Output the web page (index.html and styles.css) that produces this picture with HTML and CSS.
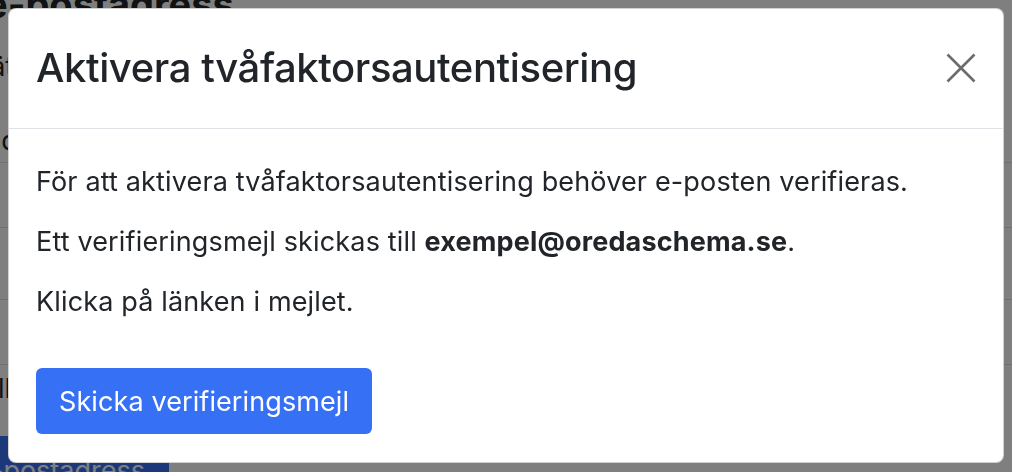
FILE: index.html
```html
<!DOCTYPE html>
<html lang="sv">
<head>
<meta charset="utf-8">
<title>Aktivera tvåfaktorsautentisering</title>
<link rel="stylesheet" href="styles.css">
</head>
<body>
<div class="page">
  <h1 class="page-title">e-postadress</h1>
  <p class="page-text">rätt adress</p>
  <p class="page-label">adress</p>
  <div class="rows">
    <div class="row r1"></div>
    <div class="row r2"></div>
    <div class="row r3"></div>
  </div>
  <p class="page-note">ll</p>
  <button class="page-btn">e-postadress</button>
</div>

<div class="backdrop"></div>

<div class="modal" role="dialog" aria-labelledby="mt">
  <div class="modal-header">
    <h2 class="modal-title" id="mt">Aktivera tvåfaktorsautentisering</h2>
    <button class="close" aria-label="Stäng">
      <svg width="30" height="30" viewBox="0 0 30 30"><path d="M1.5 1.5 L28.5 28.5 M28.5 1.5 L1.5 28.5" stroke="#6c6c6c" stroke-width="2.6" fill="none"/></svg>
    </button>
  </div>
  <div class="modal-body">
    <p>För att aktivera tvåfaktorsautentisering behöver e-posten verifieras.</p>
    <p>Ett verifieringsmejl skickas till <strong>exempel@oredaschema.se</strong>.</p>
    <p>Klicka på länken i mejlet.</p>
    <div class="actions">
      <button class="btn-primary">Skicka verifieringsmejl</button>
    </div>
  </div>
</div>
</body>
</html>
```
FILE: styles.css
```css
* { box-sizing: border-box; }
html { overflow: hidden; }
html, body { margin: 0; padding: 0; }
body {
  width: 1012px;
  height: 472px;
  overflow: hidden;
  background: #fff;
  font-family: Inter, "Noto Sans", sans-serif;
  color: #212529;
}

/* background page (under the backdrop) */
.page {
  height: 472px;
  overflow: hidden;
}
.page-title {
  margin: -19px 0 0 -15px;
  font-size: 38px;
  font-weight: 700;
  line-height: 46px;
  white-space: nowrap;
}
.page-text {
  margin: 22px 0 0 -20px;
  font-size: 27px;
  line-height: 36px;
}
.page-label {
  margin: 38px 0 0 -14px;
  font-size: 27px;
  line-height: 36px;
}
.rows {
  margin-top: 3px;
  border-bottom: 1px solid #dee2e6;
}
.row {
  border-top: 1px solid #dee2e6;
  height: 65px;
}
.row.r2 { height: 72px; }
.page-note {
  margin: 6px 0 0 -2px;
  font-size: 27px;
  line-height: 36px;
}
.page-btn {
  display: block;
  margin: 29px 0 0 -62px;
  width: 231px;
  height: 70px;
  padding: 0 24px 0 0;
  text-align: right;
  white-space: nowrap;
  border: 0;
  border-radius: 6px;
  background: #3672f5;
  color: #fff;
  font-family: Inter, "Noto Sans", sans-serif;
  font-size: 27px;
  line-height: 70px;
}

/* overlay */
.backdrop {
  position: fixed;
  inset: 0;
  background: rgba(0, 0, 0, 0.5);
}

.modal {
  position: fixed;
  top: 8px;
  left: 8px;
  width: 996px;
  height: 455px;
  background: #fff;
  border: 1px solid rgba(0, 0, 0, 0.18);
  border-radius: 8px;
  overflow: hidden;
}
.modal-header {
  display: flex;
  align-items: center;
  justify-content: space-between;
  padding: 34px 27px 35px 27px;
  border-bottom: 1px solid #dee2e6;
}
.modal-title {
  margin: 0;
  font-size: 40px;
  font-weight: 500;
  line-height: 50px;
  letter-spacing: -0.4px;
}
.close {
  display: flex;
  padding: 0;
  border: 0;
  background: transparent;
}
.modal-body {
  padding: 35px 27px 28px;
  font-size: 27px;
  line-height: 36px;
  letter-spacing: 0.15px;
}
.modal-body p {
  margin: 0 0 24px;
}
.modal-body strong { font-weight: 700; }
.actions {
  padding-top: 24px;
}
.btn-primary {
  height: 66px;
  padding: 0 23px;
  border: 0;
  border-radius: 6px;
  background: #3570f5;
  color: #fff;
  font-family: Inter, "Noto Sans", sans-serif;
  font-size: 27px;
  line-height: 1;
  letter-spacing: 0.1px;
}
```
